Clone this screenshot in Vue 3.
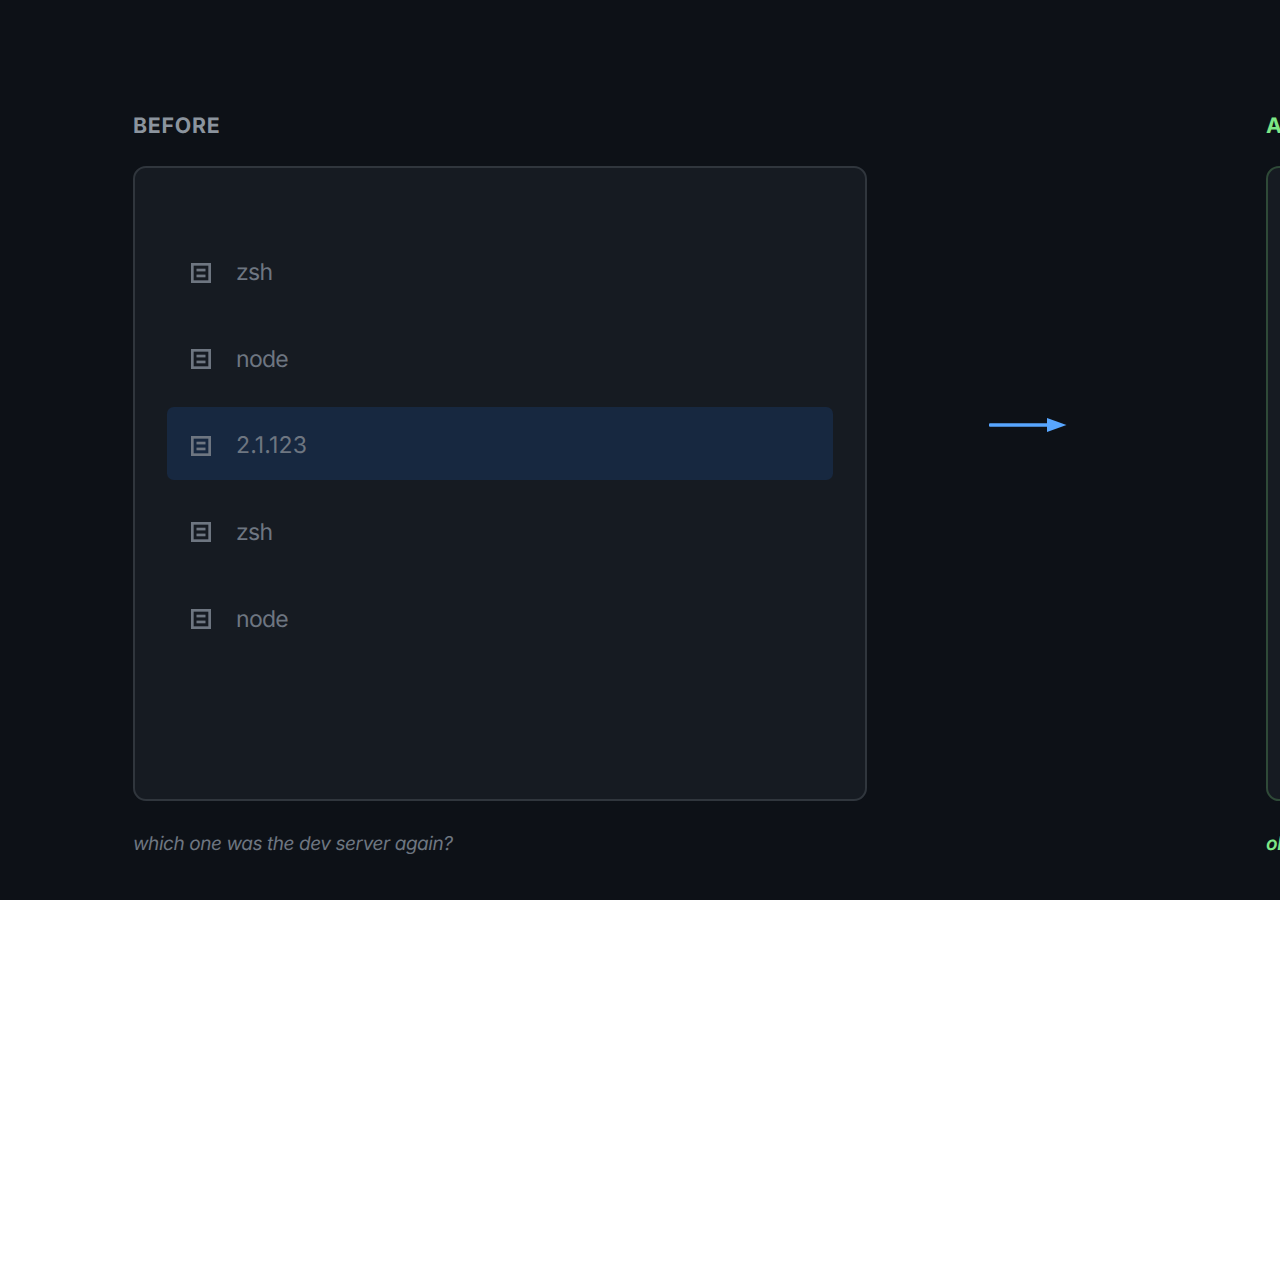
<template>
  <div class="stage">
    <section class="side">
      <h2 class="label">BEFORE</h2>
      <div class="panel">
        <div
          v-for="(tab, i) in tabs"
          :key="i"
          class="tab"
          :class="{ active: i === 2 }"
        >
          <svg class="tab-icon" viewBox="0 0 20 20" width="20" height="20">
            <rect x="1.33" y="1.33" width="17.33" height="17.33" fill="none" stroke="currentColor" stroke-width="2.67" />
            <rect x="5.5" y="5.7" width="9" height="2.7" fill="currentColor" />
            <rect x="5.5" y="11.6" width="9" height="2.7" fill="currentColor" />
          </svg>
          <span class="tab-name">{{ tab }}</span>
        </div>
      </div>
      <p class="caption">which one was the dev server again?</p>
    </section>

    <div class="arrow-col">
      <svg class="arrow" viewBox="0 0 78 14" width="78" height="14">
        <rect x="0" y="5.25" width="60" height="3.5" rx="1" fill="#58a6ff" />
        <polygon points="58,0 77.5,7 58,14" fill="#58a6ff" />
      </svg>
    </div>

    <section class="side after">
      <h2 class="label">AFTER</h2>
      <div class="panel"></div>
      <p class="caption">oh, right there</p>
    </section>
  </div>
</template>

<script setup>
const tabs = ['zsh', 'node', '2.1.123', 'zsh', 'node']
</script>

<style scoped>
.stage {
  display: flex;
  height: 900px;
  width: 1280px;
  box-sizing: border-box;
  padding: 112px 0 0 133px;
  background: #0d1117;
  overflow: hidden;
  font-family: Inter, "Liberation Sans", sans-serif;
  text-rendering: geometricPrecision;
}

.side {
  flex: none;
  width: 734px;
}

.label {
  margin: 0 0 27px;
  height: 27px;
  font-size: 21.33px;
  line-height: 28px;
  font-weight: 700;
  letter-spacing: 0.75px;
  color: #8b949e;
}

.panel {
  box-sizing: border-box;
  height: 634.5px;
  padding: 66px 32px 0;
  background: #161b22;
  border: 2px solid #30363d;
  border-radius: 13px;
  display: flex;
  flex-direction: column;
  gap: 13.67px;
}

.tab {
  box-sizing: border-box;
  height: 73px;
  padding: 4px 0 0 24px;
  display: flex;
  align-items: center;
  gap: 25px;
  border-radius: 6.67px;
  font-size: 23px;
  letter-spacing: -0.7px;
  color: #6e7681;
}

.tab.active {
  background: #172840;
  letter-spacing: 0.1px;
}

.tab-icon {
  flex: none;
}

.tab-name {
  margin-top: -1px;
}

.caption {
  margin: 29px 0 0;
  font-size: 19px;
  line-height: 27px;
  letter-spacing: -0.43px;
  font-style: italic;
  color: #6e7681;
}

.arrow-col {
  flex: none;
  width: 399px;
  padding: 306px 0 0 122px;
  box-sizing: border-box;
}

.arrow {
  display: block;
}

.after .label,
.after .caption {
  color: #7ee787;
  white-space: nowrap;
}

.after .caption {
  font-weight: 600;
}

.after .panel {
  border-color: #2f4a38;
}
</style>

<style>
body {
  overflow: hidden;
  background: #fff;
}
</style>
